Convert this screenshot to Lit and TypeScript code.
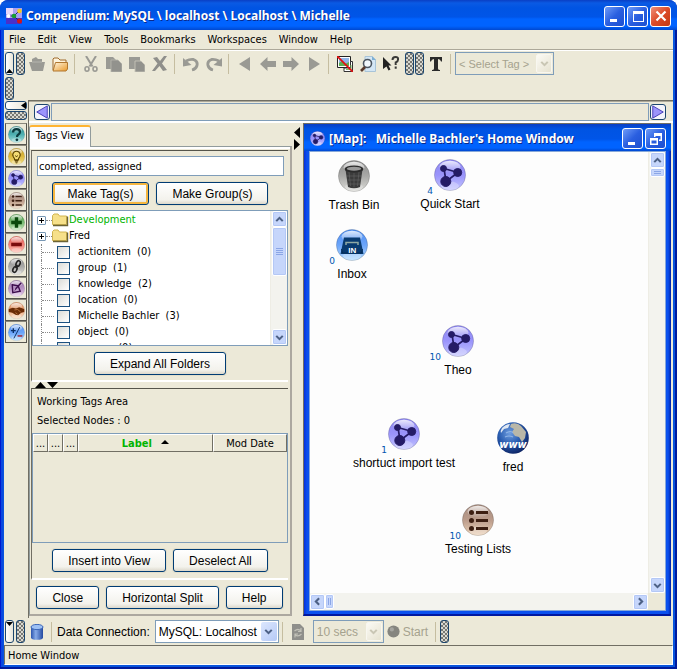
import { LitElement, html, svg, css, nothing } from "lit";
import { customElement, state } from "lit/decorators.js";
import { styleMap } from "lit/directives/style-map.js";

const icon = (body: unknown, size = 16, box = 16) =>
  html`<svg class="ico" width=${size} height=${size} viewBox="0 0 ${box} ${box}" aria-hidden="true">${body}</svg>`;

/* ---- round node symbols, all on a 32 unit grid ---- */
const orb = (fill: string, glyph: unknown) => svg`
  <circle cx="16" cy="16" r="15.6" fill="url(#${fill})" stroke="#0003" stroke-width=".8"/>
  <ellipse cx="16" cy="7.6" rx="10.5" ry="5.8" fill="url(#shine)"/>
  <ellipse cx="16" cy="27" rx="9" ry="4.4" fill="#fff" opacity=".28"/>
  ${glyph}`;

const orbs: Record<string, unknown> = {
  map: orb("gViolet", svg`<g fill="#241b66" stroke="#241b66"><path d="M10 9.5 24 13.500 12 22.500Z" fill="none" stroke-width="1.700"/><circle cx="9.500" cy="9.500" r="3"/><circle cx="23.700" cy="13.500" r="4"/><circle cx="11.800" cy="22.500" r="5"/></g>`),
  trash: orb("gGray", svg`<path d="M7.500 9.500 10 27q6 2.500 12 0L24.500 9.500Z" fill="#3b3b3b"/><path d="M11 12 12.500 26M16 13V27M21 12 19.500 26M9 16H23M9.500 20H22.500M10 24H22" stroke="#666" stroke-width=".6"/><ellipse cx="16" cy="9" rx="9.500" ry="3.600" fill="#2c2c2c"/><ellipse cx="16" cy="8.700" rx="7.200" ry="2" fill="#9a9a9a"/>`),
  inbox: orb("gBlue", svg`<path d="M8 8.500H24L27.500 25H4.500Z" fill="#083a70"/><path d="M10 16V13.500H22V16" fill="none" stroke="#8fa9a4" stroke-width="1.500"/><path d="M5.500 20 6.500 24H25.500L26.500 20" fill="none" stroke="#052c58"/><text x="16.200" y="23.500" text-anchor="middle" font-family="Liberation Sans, sans-serif" font-weight="bold" font-size="8" fill="#fff">IN</text>`),
  list: orb("gBrown", svg`<g fill="#3d1f12"><circle cx="9.500" cy="8.500" r="2.500"/><circle cx="9.500" cy="16.500" r="2.500"/><circle cx="9.500" cy="24.500" r="2.500"/><path d="M14 7H26V10H14ZM14 15H26V18H14ZM14 23H26V26H14Z"/></g>`),
  web: svg`<circle cx="16" cy="16" r="15.800" fill="url(#gGlobe)"/><path d="M14 2q6-2 10 2l5 6-1 6-3 4-3-5-4-1-3-4 2-3-4-2Z" fill="#b9b7a8"/><path d="M5 6q4-4 8-4l-2 4-4 1-3 4q-1-2 1-5Z" fill="#dfe7f2"/><path d="M9 11q5-3 7 0M8 15q4-2 8 0" stroke="#8fb4e6" fill="none" stroke-width="1.200"/><text x="16" y="26" text-anchor="middle" font-family="DejaVu Sans, sans-serif" font-weight="bold" font-style="italic" font-size="10" fill="#fff">www</text>`,
  question: orb("gTeal", svg`<path d="M9.500 12q0-6 6.500-6t6.500 5.500q0 3-3.500 5-2 1.200-2 4" fill="none" stroke="#0b3a3e" stroke-width="4.200"/><circle cx="16.800" cy="26" r="2.600" fill="#0b3a3e"/>`),
  bulb: orb("gYellow", svg`<path d="M12.500 22q0-3-2.500-5.500-2.500-4.500 1-8.500 5-4 10 0 3.500 4 1 8.500Q19.500 19 19.500 22Z" fill="#f4dc74" stroke="#574000" stroke-width="2"/><path d="M12.500 23.500h7M13 26h6M14.500 28h3M14 14l2 3 2-3" stroke="#574000" stroke-width="1.800" fill="none"/>`),
  plus: orb("gGreen", svg`<path d="M12.800 6H19.200V12.800H26V19.200H19.200V26H12.800V19.200H6V12.800H12.800Z" fill="#0a4a0c"/>`),
  minus: orb("gRed", svg`<path d="M6 12.800H26V19.200H6Z" fill="#7a0c0c"/>`),
  link: orb("gGray", svg`<g fill="none" stroke="#222" stroke-width="3"><ellipse cx="19" cy="10.500" rx="3.600" ry="5.600" transform="rotate(25 19 10.500)"/><ellipse cx="13" cy="21.500" rx="3.600" ry="5.600" transform="rotate(25 13 21.500)"/><path d="M17.500 13 14.500 19"/></g>`),
  note: orb("gPlum", svg`<path d="M8 9 19 11 23 21 9 24Z" fill="none" stroke="#3d0c4d" stroke-width="2.600"/><path d="M26 6 15 18 12 21 14 15 24 4Z" fill="#3d0c4d"/>`),
  hands: orb("gOrange", svg`<path d="M1.500 13 9 11 15 12 21 10 30.500 13V19L25 20 19 25 14 24 8 20 1.500 19Z" fill="#6b2c06"/><path d="M12 15 18 14 24 19M14 20 18 23" stroke="#d9925a" stroke-width="1.200" fill="none"/>`),
  plusminus: orb("gBlue", svg`<path d="M10 8V17M5.500 12.500H14.500" stroke="#0b2f66" stroke-width="2.600"/><path d="M22 6 11 27" stroke="#0b2f66" stroke-width="1.800"/><path d="M18 22.500H27" stroke="#a3202a" stroke-width="2.600"/>`),
};

const stops = (id: string, a: string, b: string, c: string) => svg`
  <linearGradient id=${id} x1="0" y1="0" x2="0" y2="1"><stop offset="0" stop-color=${a}/><stop offset=".5" stop-color=${b}/><stop offset="1" stop-color=${c}/></linearGradient>`;

const defs = html`<svg class="defs" width="0" height="0" aria-hidden="true"><defs>
  ${stops("gViolet", "#8f88f0", "#9a94fb", "#c4c6ff")}
  ${stops("gGray", "#8b8b8b", "#a9a9a7", "#dcdcd8")}
  ${stops("gBlue", "#4f8ef0", "#6aa4fa", "#b4dcff")}
  ${stops("gBrown", "#a58c80", "#bb9c8b", "#ecd2b8")}
  ${stops("gTeal", "#2c8a8e", "#4fb0b2", "#a9e0de")}
  ${stops("gYellow", "#c39a24", "#dcb93e", "#f4e28a")}
  ${stops("gGreen", "#4f9a4c", "#7abb74", "#c4e8bc")}
  ${stops("gRed", "#dc5a50", "#f08078", "#ffc4b8")}
  ${stops("gPlum", "#9470a4", "#b894c4", "#e6cdea")}
  ${stops("gOrange", "#d98858", "#eeb088", "#fbdcc0")}
  ${stops("shine", "#ffffffd0", "#ffffff70", "#ffffff00")}
  <radialGradient id="gGlobe" cx=".4" cy=".35" r=".7"><stop offset="0" stop-color="#6f9ee0"/><stop offset=".5" stop-color="#2a5db0"/><stop offset="1" stop-color="#0a1f5e"/></radialGradient>
  <linearGradient id="gFolder" x1="0" y1="0" x2="1" y2="1"><stop offset="0" stop-color="#fff6e0"/><stop offset="1" stop-color="#ea9a2c"/></linearGradient>
  <linearGradient id="gDb" x1="0" y1="0" x2="1" y2="0"><stop offset="0" stop-color="#2c55ae"/><stop offset=".4" stop-color="#86aae8"/><stop offset="1" stop-color="#2349a0"/></linearGradient>
</defs></svg>`;

/* ---- toolbar symbols, 16 unit grid ---- */
const G = "#9a9a94";
const tools: Record<string, unknown> = {
  open: svg`<path d="M3 3 7 1 9 3H13V6H16L14 15H3L0 6H3Z" fill=${G}/><path d="M3 6H13" stroke="#b5b5ae"/>`,
  folder: svg`<path d="M1 14V3L2 2H6L8 4H14V14Z" fill="#fdf3dc" stroke="#a06a2c"/><path d="M1 15 3.500 6.500H15.500V13L14 15Z" fill="url(#gFolder)" stroke="#b0762e"/>`,
  cut: svg`<path d="M3 0 9.500 10.500M13 0 6.500 10.500" stroke=${G} stroke-width="2"/><ellipse cx="4" cy="13" rx="2" ry="2.200" fill="none" stroke=${G} stroke-width="1.600"/><ellipse cx="12" cy="13" rx="2" ry="2.200" fill="none" stroke=${G} stroke-width="1.600"/>`,
  copy: svg`<path d="M0 1H7L10 4V13H0Z" fill=${G}/><path d="M5 4H12L16 8V16H5Z" fill="#92928d" stroke="#b9b8ae" stroke-width=".8"/>`,
  paste: svg`<path d="M0 1H11V13H0Z" fill=${G}/><path d="M6 5H12L16 9V16H6Z" fill="#92928d" stroke="#c6c4b8" stroke-width=".9"/>`,
  del: svg`<path d="M1 2 5 1 8 5 12 0H15L10 7.500 15 14 11 15 7.500 10 3 15H0L5.500 7.500Z" fill="#8f8f8b"/>`,
  undo: svg`<path d="M3 5Q7 3 10.500 3.500 15 5 14 9.500 13 13 9 14" fill="none" stroke=${G} stroke-width="2.800"/><path d="M0 2V10.500L8.500 9Z" fill=${G}/>`,
  redo: svg`<path d="M13 5Q9 3 5.500 3.500 1 5 2 9.500 3 13 7 14" fill="none" stroke=${G} stroke-width="2.800"/><path d="M16 2V10.500L7.500 9Z" fill=${G}/>`,
  first: svg`<path d="M13 1V15L2 8Z" fill=${G}/>`,
  back: svg`<path d="M0 8 7.500 1V5H16V11H7.500V15Z" fill=${G}/>`,
  fwd: svg`<path d="M16 8 8.500 1V5H0V11H8.500V15Z" fill=${G}/>`,
  last: svg`<path d="M3 1V15L14 8Z" fill=${G}/>`,
  image: svg`<path d="M.5 .5H13.500V11.500H.5Z" fill="#fff" stroke="#222"/><path d="M2 2H12V10H2Z" fill="#8fb4e8"/><path d="M2 10V7L5 5 8 8 12 6V10Z" fill="#5cae50"/><path d="M7 12H13.500V5.500H15.500V15.500H7Z" fill="#fff" stroke="#333"/><path d="M9 13.500H14V9" fill="none" stroke="#7cb85c"/><path d="M0 0 16 16" stroke="#e01010" stroke-width="1.800"/>`,
  find: svg`<path d="M5 .5H12L15.500 4V15.500H5Z" fill="#d4e6f4" stroke="#a8c4d8"/><path d="M12 0V4H16" fill="#7fb0d4"/><circle cx="7.500" cy="7.500" r="4" fill="#f2f8fc" stroke="#4b5560" stroke-width="1.600"/><path d="M5 11 1 15" stroke="#5a3a2c" stroke-width="2.600"/>`,
  help: svg`<path d="M0 1 8.500 9.500H5.500L7.500 13.500 5.500 14.500 3.500 10.500 0 13Z" fill="#222"/><path d="M9.500 4Q9.500 1 12.500 1T15 3.700Q15 5.500 12.700 6.500V9M12.700 10.500V12.800" fill="none" stroke="#3a3a38" stroke-width="2"/>`,
  text: svg`<path d="M2 1H14V5.500H13Q12.500 3 10 3V12.500Q10 14 12 14V15H4V14Q6 14 6 12.500V3Q3.500 3 3 5.500H2Z" fill="#2a2a2a"/>`,
  db: svg`<path d="M2 3V13.500Q2 15.800 8 15.800T14 13.500V3Z" fill="url(#gDb)"/><ellipse cx="8" cy="3" rx="6" ry="2.600" fill="#9cc0f4" stroke="#3b66b8"/>`,
  refresh: svg`<path d="M2 0H10L14 4V16H2Z" fill="#8f8f8b"/><path d="M4.500 7Q8 4 11 7M11 4V7.500H8M11.500 10Q8 13.500 5 10.500M5 13.500V10H8" stroke="#c2c1b8" stroke-width="1.200" fill="none"/>`,
};

const chevron = (dir: "up" | "down" | "left" | "right", color = "#4d6185") => {
  const d = { up: "M4 10 8 6 12 10", down: "M4 6 8 10 12 6", left: "M10 4 6 8 10 12", right: "M6 4 10 8 6 12" }[dir];
  return icon(svg`<path d=${d} fill="none" stroke=${color} stroke-width="2.600"/>`, 13);
};

type MapNode = { kind: string; label: string; count?: number; x: number; y: number };
const nodes: MapNode[] = [
  { kind: "trash", label: "Trash Bin", x: 44, y: 8 },
  { kind: "map", label: "Quick Start", count: 4, x: 140, y: 7 },
  { kind: "inbox", label: "Inbox", count: 0, x: 42, y: 77 },
  { kind: "map", label: "Theo", count: 10, x: 148, y: 173 },
  { kind: "map", label: "shortuct import test", count: 1, x: 94, y: 266 },
  { kind: "web", label: "fred", x: 203, y: 270 },
  { kind: "list", label: "Testing Lists", count: 10, x: 168, y: 352 },
];

const palette: [string, string][] = [
  ["question", "Question"], ["bulb", "Answer"], ["map", "Map"], ["list", "List"], ["plus", "Pro"],
  ["minus", "Con"], ["link", "Reference"], ["note", "Note"], ["hands", "Decision"], ["plusminus", "Argument"],
];

const toolbar: [string, string][][] = [
  [["open", "Open"], ["folder", "New"]],
  [["cut", "Cut"], ["copy", "Copy"], ["paste", "Paste"], ["del", "Delete"]],
  [["undo", "Undo"], ["redo", "Redo"]],
  [["first", "First"], ["back", "Back"], ["fwd", "Forward"], ["last", "Last"]],
  [["image", "Images"], ["find", "Search"], ["help", "What is this"]],
];

@customElement("app-root")
export class AppRoot extends LitElement {
  @state() private tags = "completed, assigned";

  static styles = css`
    :host { display: block; --face: #ece9d8; --line: #7f9db9; --ui: "DejaVu Sans Condensed", "DejaVu Sans", sans-serif; --arial: "Liberation Sans", Arial, sans-serif; }
    * { box-sizing: border-box; }
    button, input, select { font: inherit; color: inherit; margin: 0; padding: 0; }
    button { background: none; border: 0; }
    .defs { position: absolute; }
    .ico { display: block; flex: none; }
    .window { height: 100vh; min-height: 640px; display: flex; flex-direction: column; border-radius: 8px 8px 0 0; overflow: hidden; font: 11px/16px var(--ui); color: #000;
      background: linear-gradient(90deg, #0019cf 0 1px, #0a48e0 1px 3px, #0855dd 3px calc(100% - 4px), #0855dd calc(100% - 4px) calc(100% - 2px), #001a9c calc(100% - 2px)); border-bottom: 2px solid #001a9c; padding-bottom: 2px; }
    .titlebar { flex: none; height: 30px; display: flex; align-items: center; gap: 4px; padding: 2px 6px 0 6px; background: linear-gradient(#0a3fc4, #0a5ae4 3px, #0054e3 8px, #0055e8 17px, #0063ff 19px, #0063ff 26px, #0048d0); color: #fff; }
    .titlebar h1 { margin: 0; flex: 1; font: bold 12px/20px "Noto Sans", sans-serif; text-shadow: 1px 1px #0a2a8c; white-space: nowrap; }
    .caption { display: flex; gap: 2px; }
    .cap { width: 21px; height: 21px; border: 1px solid #fff; border-radius: 3px; background: linear-gradient(135deg, #6f9cf8, #2a5fe0 50%, #1c4fd0); display: grid; place-items: center; }
    .cap.close { background: linear-gradient(135deg, #f0907a, #dc4a28 50%, #c43a14); }
    .frame { flex: 1; min-height: 0; margin: 0 4px; background: var(--face); display: flex; flex-direction: column; }
    .menubar { flex: none; height: 20px; display: flex; gap: 12px; padding: 1px 5px 0; border-bottom: 1px solid #aca899; }
    .tools { flex: none; height: 50px; border-top: 1px solid #fff; padding: 1px; display: flex; flex-direction: column; gap: 2px; }
    .row { display: flex; align-items: center; height: 23px; }
    .grips { display: flex; gap: 2px; }
    .grips.pair { margin-left: 3px; gap: 1px; }
    .grip, .fold { flex: none; width: 9px; height: 23px; border: 1px solid #1c466f; border-radius: 3px; }
    .grip { background: conic-gradient(#333 0 25%, transparent 0) 0 1px / 4px 4px, #d5d5cd; background: linear-gradient(#222, #222) 0 0 / 1px 1px, #d5d5cd; background: radial-gradient(circle at 1px 1px, #333 0 0.5px, transparent 1px) 0 0 / 4px 4px, radial-gradient(circle at 1px 1px, #333 0 0.5px, transparent 1px) 2px 2px / 4px 4px, #d8d8d0; }
    .fold { background: linear-gradient(90deg, #fff, #e9e6d8); display: grid; place-items: end center; }
    .fold.top { place-items: start center; }
    .wide { width: 22px; height: 9px; }
    .fold.wide { place-items: center end; }
    .tool { width: 23px; height: 23px; display: grid; place-items: center; }
    .sep { flex: none; width: 1px; height: 20px; background: #c5bda0; margin: 0 4px 0 3px; }
    .combo { position: relative; display: grid; }
    .combo select { appearance: none; height: 23px; border: 1px solid var(--line); border-radius: 0; background: #fff; font: 12px/20px var(--arial); padding: 0 20px 0 3px; opacity: 1; }
    .combo select:disabled { background: var(--face); color: #a5a28e; }
    .combo .drop { position: absolute; right: 2px; top: 2px; width: 16px; height: 19px; border-radius: 2px; background: linear-gradient(135deg, #dce7fe, #b5c9f6); display: grid; place-items: center; pointer-events: none; }
    .combo .drop.off { background: linear-gradient(135deg, #fbfaf4, #e6e2d0); border: 1px solid #f8f7f0; }
    .tagsel { width: 99px; } .consel { width: 124px; } .timesel { width: 71px; }
    .small select { font-size: 11px; }
    .body { flex: 1; min-height: 0; display: flex; }
    .palette { flex: none; width: 24px; padding: 1px 1px 0; display: flex; flex-direction: column; gap: 1px; }
    .orbs { display: flex; flex-direction: column; margin-top: 2px; }
    .orbbtn { width: 22px; height: 22px; border: 1px solid #55544e; border-top-color: #8a887c; display: grid; place-items: center; }
    .main { flex: 1; min-width: 0; display: flex; flex-direction: column; border: 1px solid #716f64; border-width: 1px 0 0 1px; }
    .nav { flex: none; height: 22px; display: flex; align-items: center; gap: 1px; padding: 0 7px 0 5px; border-bottom: 2px solid #fff; border-top: 1px solid #aca899; }
    .nav .track { flex: 1; height: 18px; border: 1px solid var(--line); }
    .navbtn { width: 16px; height: 16px; border: 1px solid #1c466f; border-radius: 3px; background: #f4f4fb; display: grid; place-items: center; }
    .split { flex: 1; min-height: 0; display: flex; }
    .side { flex: 0 0 263px; display: flex; flex-direction: column; padding-top: 2px; }
    .tab { align-self: flex-start; height: 22px; width: 62px; margin-bottom: -1px; z-index: 1; border: 1px solid #919b9c; border-top: 2px solid #ffb433; border-bottom: 0; border-radius: 3px 3px 0 0; background: #fcfcfe; line-height: 17px; text-align: center; white-space: nowrap; }
    .sheet { flex: 1; min-height: 0; display: flex; flex-direction: column; border: 1px solid #919b9c; border-right: 2px solid #aca8a0; border-bottom: 2px solid #aca8a0; margin-bottom: 2px; padding: 3px 2px 0 1px; background: var(--face); box-shadow: inset 0 2px #fff; }
    .upper, .lower { border-top: 1px solid #55544a; border-left: 1px solid #716f64; display: flex; flex-direction: column; }
    .upper { flex: none; border-bottom: 2px solid #fff; padding-top: 5px; }
    .field { margin: 0 4px 6px 5px; height: 20px; border: 1px solid var(--line); background: #fff; padding: 0 1px; width: auto; }
    .btns { display: flex; justify-content: center; gap: 7px; }
    .btn { height: 23px; border: 1px solid #003c74; border-radius: 3px; background: linear-gradient(#fff, #f3f2ec 80%, #dcd8cb); box-shadow: 0 0 0 1px #e2deca; font: 12px/20px var(--arial); padding: 0 15px; white-space: nowrap; }
    .btn.def { box-shadow: inset 0 0 0 2px #f5b640; }
    .tree { margin-top: 5px; height: 136px; border: 1px solid var(--line); background: #fff; display: flex; }
    .items { flex: 1; min-width: 0; height: 134px; overflow: hidden; padding: 1px 0 0 4px; margin: 0; list-style: none; }
    .items li { height: 16px; display: flex; align-items: center; white-space: nowrap; }
    .twig { flex: none; width: 9px; height: 9px; border: 1px solid #7898b5; border-radius: 1px; background: #fff; display: grid; place-items: center; }
    .dash { flex: none; width: 6px; border-top: 1px dotted #888; }
    .green { color: #00b400; }
    .items .leaf { margin-left: 4px; border-left: 1px dotted #888; }
    .leaf .dash { width: 12px; margin-right: 3px; }
    .leaf label { display: flex; align-items: center; gap: 8px; white-space: pre; }
    .leaf input { appearance: none; flex: none; width: 13px; height: 13px; border: 1px solid #1c5180; background: linear-gradient(135deg, #dcdcd7, #fff); }
    .bar { flex: none; background: #f3f3ee; display: flex; }
    .bar.v { width: 17px; flex-direction: column; border-left: 1px solid #eeede5; align-items: center; }
    .bar.h { height: 17px; align-items: center; }
    .sb, .thumb { border: 1px solid #fff; border-radius: 2px; background: #c6d6fb; box-shadow: inset 0 0 0 1px #b4c8f6; display: grid; place-items: center; }
    .sb { flex: none; width: 15px; height: 16px; }
    .thumb.tall { width: 15px; height: 49px; } .thumb.flat { width: 15px; height: 9px; } .thumb.slim { width: 9px; height: 15px; }
    .grow { flex: 1; }
    .expand { padding: 6px 0 5px; }
    .arrows { flex: none; height: 6px; padding-left: 4px; display: flex; }
    .lower { flex: 1; min-height: 0; border-bottom: 2px solid #fff; padding-top: 4px; }
    .note { margin: 0; padding-left: 5px; height: 19px; line-height: 17px; }
    .grid { flex: 1; min-height: 0; margin: 2px 0 6px; border: 1px solid var(--line); }
    table { width: 100%; table-layout: fixed; border-collapse: separate; border-spacing: 0; }
    th { height: 18px; padding: 0; font-weight: normal; text-align: center; border: 1px solid #fff; border-right-color: #716f64; border-bottom-color: #716f64; overflow: hidden; line-height: 15px; }
    th.dots { width: 15px; } th.date { width: 74px; }
    th.lab { font-weight: bold; color: #00b400; }
    th .ico { display: inline-block; margin-left: 6px; vertical-align: 3px; }
    .foot { padding: 6px 0 5px; }
    .pad { padding-bottom: 6px; }
    .divider { flex: none; width: 11px; padding: 4px 2px; display: flex; flex-direction: column; gap: 1px; }
    .mapwin { flex: 1; min-width: 0; margin: 0 2px 2px 0; display: flex; flex-direction: column; border: 1px solid #716f64; border-right-width: 0; background: linear-gradient(90deg, #0831d9, #0a50ee 3px, #0a50ee calc(100% - 3px), #001fa8); padding: 0 5px 3px 5px; border-bottom: 2px solid #0018a0; }
    .maphead { flex: none; height: 27px; margin: 0 -5px; padding: 2px 5px 0 6px; display: flex; align-items: center; gap: 4px; background: linear-gradient(#0a3fc4, #0054e3 5px, #0055e8 15px, #0063ff 18px, #0063ff 24px, #0048d0); color: #fff; font: bold 12px/20px "Noto Sans", sans-serif; text-shadow: 1px 1px #0a2a8c; white-space: pre; }
    .maphead h2 { flex: 1; min-width: 0; margin: 0; font: inherit; overflow: hidden; }
    .mapbody { flex: 1; min-height: 0; border: 1px solid #87a8d8; background: var(--face); display: grid; grid-template: minmax(0, 1fr) 17px / minmax(0, 1fr) 17px; }
    .canvas { position: relative; background: #fdfdfd; overflow: hidden; }
    .node { position: absolute; width: 130px; margin-left: -65px; display: flex; flex-direction: column; align-items: center; gap: 5px; font: 12px/16px var(--arial); }
    .count { position: absolute; right: 82px; top: 26px; font: 9px/12px "DejaVu Sans", sans-serif; color: #0055b0; }
    .bottombar { flex: none; height: 27px; display: flex; align-items: center; padding: 0 1px; }
    .bottombar label, .start { font: 12px/20px var(--arial); }
    .bottombar label { margin: 0 5px 0 1px; }
    .combo.timed { margin-left: 3px; }
    .start { display: flex; align-items: center; gap: 3px; color: #a5a28e; margin: 0 4px 0 3px; }
    .status { flex: none; height: 20px; border: 1px solid #716f64; border-right-color: #fff; border-bottom-color: #fff; padding: 0 3px; line-height: 19px; }
  `;

  private grips(up = true) {
    return html`<div class="grips">
      <button class="fold ${up ? "" : "top"}" aria-label="Collapse toolbar"><svg class="ico" width="7" height="6" viewBox="0 0 7 6"><path d=${up ? "M0 5 3.500 1 7 5Z" : "M0 1 3.500 5 7 1Z"}/></svg></button>
      <span class="grip"></span></div>`;
  }

  private toolButton([key, label]: [string, string]) {
    return html`<button class="tool" aria-label=${label}>${icon(tools[key])}</button>`;
  }

  private leaf(name: string, n: number) {
    return html`<li class="leaf"><span class="dash"></span><label><input type="checkbox" />${name}  (${n})</label></li>`;
  }

  private branch(name: string, green = false) {
    return html`<li><button class="twig" aria-label="Expand ${name}"><svg class="ico" width="5" height="5" viewBox="0 0 5 5"><path d="M0 2H5V3H0ZM2 0H3V5H2Z"/></svg></button><span class="dash"></span>
      <svg class="ico" width="17" height="14" viewBox="0 0 17 14"><path d="M.5 11.500V2.500L2 1H6L7.500 3H14.500V11.500Z" fill="#f6e08a" stroke="#d0b450"/><path d="M1 12.500H15.500V3.500" fill="none" stroke="#6b6336" stroke-width="1.400"/></svg>
      <span class=${green ? "green" : ""}>${name}</span></li>`;
  }

  render() {
    return html`${defs}
    <div class="window">
      <header class="titlebar">
        <svg class="ico" width="16" height="16" viewBox="0 0 16 16"><path d="M0 0H16V16H0Z" fill="#a8a0f0"/><path d="M0 10H16V16H0Z" fill="#4a30c8"/><path d="M0 0H7V6H0Z" fill="#e8d8fa"/><path d="M2 8H8L13 3M8 8 13 13" stroke="#202060" fill="none"/><circle cx="2.500" cy="8" r="2" fill="#fff"/><circle cx="8" cy="8" r="2.300" fill="#18a030"/><circle cx="13.500" cy="3" r="2.300" fill="#f0c820"/><circle cx="13.500" cy="13" r="2.500" fill="#d01818"/></svg>
        <h1>Compendium: MySQL \\ localhost \\ Localhost \\ Michelle</h1>
        <div class="caption">
          <button class="cap" aria-label="Minimize">${icon(svg`<path d="M3 11H10V14H3Z" fill="#fff"/>`)}</button>
          <button class="cap" aria-label="Maximize">${icon(svg`<path d="M3 3H14V14H3ZM4 6V13H13V6Z" fill="#fff" fill-rule="evenodd"/>`)}</button>
          <button class="cap close" aria-label="Close">${icon(svg`<path d="M3.500 3.500 12.500 12.500M12.500 3.500 3.500 12.500" stroke="#fff" stroke-width="2.200"/>`)}</button>
        </div>
      </header>
      <div class="frame">
        <nav class="menubar">${["File", "Edit", "View", "Tools", "Bookmarks", "Workspaces", "Window", "Help"].map((m) => html`<button>${m}</button>`)}</nav>
        <div class="tools">
          <div class="row">
            ${this.grips()}
            ${toolbar.map((g, i) => html`${i ? html`<span class="sep"></span>` : nothing}${g.map((b) => this.toolButton(b))}`)}
            <div class="grips pair"><span class="grip"></span><span class="grip"></span></div>
            ${this.toolButton(["text", "Format text"])}<span class="sep"></span>
            <span class="combo small"><select class="tagsel" aria-label="Tag" disabled><option>&lt; Select Tag &gt;</option></select><span class="drop off">${chevron("down", "#c9c6b4")}</span></span>
          </div>
          <div class="row"><span class="grip"></span></div>
        </div>
        <div class="body">
          <aside class="palette">
            <button class="fold wide" aria-label="Collapse palette"><svg class="ico" width="5" height="7" viewBox="0 0 5 7"><path d="M5 0V7L0 3.500Z"/></svg></button>
            <span class="grip wide"></span>
            <div class="orbs">${palette.map(([k, l]) => html`<button class="orbbtn" aria-label=${l}>${icon(orbs[k], 17, 32)}</button>`)}</div>
          </aside>
          <main class="main">
            <div class="nav">
              <button class="navbtn" aria-label="Scroll left">${icon(svg`<path d="M14 1V15L2 8Z" fill="#9c94fb" stroke="#3c34b0"/>`, 14)}</button>
              <div class="track"></div>
              <button class="navbtn" aria-label="Scroll right">${icon(svg`<path d="M2 1V15L14 8Z" fill="#9c94fb" stroke="#3c34b0"/>`, 14)}</button>
            </div>
            <div class="split">
              ${this.sidePanel()}
              <div class="divider">
                <svg class="ico" width="6" height="23" viewBox="0 0 6 23"><path d="M6 0V11L0 5.500ZM0 12V23L6 17.500Z"/></svg>
              </div>
              ${this.mapWindow()}
            </div>
          </main>
        </div>
        <div class="bottombar">
          ${this.grips(false)}
          ${this.toolButton(["db", "Database"])}<span class="sep"></span>
          <label for="con">Data Connection:</label>
          <span class="combo"><select id="con" class="consel"><option>MySQL: Localhost</option></select><span class="drop">${chevron("down")}</span></span>
          <span class="sep"></span>${this.toolButton(["refresh", "Refresh"])}
          <span class="combo timed"><select class="timesel" aria-label="Interval" disabled><option>10 secs</option></select><span class="drop off">${chevron("down", "#c9c6b4")}</span></span>
          <button class="start" disabled>${icon(svg`<circle cx="8" cy="8" r="7.500" fill="#85857f"/><circle cx="6" cy="5.500" r="2.600" fill="#a5a5a0"/>`, 13)}Start</button>
          <span class="sep"></span><span class="grip"></span>
        </div>
        <footer class="status">Home Window</footer>
      </div>
    </div>`;
  }

  private sidePanel() {
    return html`<section class="side">
      <div class="tab">Tags View</div>
      <div class="sheet">
        <div class="upper">
          <input class="field" type="text" aria-label="Tags" .value=${this.tags} @input=${(e: Event) => (this.tags = (e.target as HTMLInputElement).value)} />
          <div class="btns"><button class="btn def">Make Tag(s)</button><button class="btn">Make Group(s)</button></div>
          <div class="tree">
            <ul class="items">
              ${this.branch("Development", true)}${this.branch("Fred")}
              ${this.leaf("actionitem", 0)}${this.leaf("group", 1)}${this.leaf("knowledge", 2)}${this.leaf("location", 0)}
              ${this.leaf("Michelle Bachler", 3)}${this.leaf("object", 0)}${this.leaf("person", 0)}
            </ul>
            <div class="bar v">
              <button class="sb" aria-label="Up">${chevron("up")}</button>
              <div class="thumb tall"><svg class="ico" width="7" height="8" viewBox="0 0 7 8"><path d="M0 .5H7M0 2.500H7M0 4.500H7M0 6.500H7" stroke="#8ba6e6"/></svg></div>
              <span class="grow"></span>
              <button class="sb" aria-label="Down">${chevron("down")}</button>
            </div>
          </div>
          <div class="btns expand"><button class="btn">Expand All Folders</button></div>
        </div>
        <div class="arrows"><svg class="ico" width="24" height="6" viewBox="0 0 24 6"><path d="M0 6 5.500 0 11 6ZM12 0H23L17.500 6Z"/></svg></div>
        <div class="lower">
          <p class="note">Working Tags Area</p>
          <p class="note">Selected Nodes : 0</p>
          <div class="grid"><table><thead><tr>
            <th class="dots">...</th><th class="dots">...</th><th class="dots">...</th>
            <th class="lab">Label <svg class="ico" width="8" height="4" viewBox="0 0 8 4"><path d="M0 4 4 0 8 4Z"/></svg></th><th class="date">Mod Date</th>
          </tr></thead></table></div>
          <div class="btns pad"><button class="btn">Insert into View</button><button class="btn">Deselect All</button></div>
        </div>
        <div class="btns foot"><button class="btn">Close</button><button class="btn">Horizontal Split</button><button class="btn">Help</button></div>
      </div>
    </section>`;
  }

  private mapWindow() {
    return html`<section class="mapwin">
      <header class="maphead">
        ${icon(orbs.map, 15, 32)}
        <h2>[Map]:   Michelle Bachler's Home Window</h2>
        <div class="caption">
          <button class="cap" aria-label="Minimize map">${icon(svg`<path d="M3 11H10V14H3Z" fill="#fff"/>`)}</button>
          <button class="cap" aria-label="Restore map">${icon(svg`<path d="M6 2H14V10H11V8.500H12.500V5H7.500V6H6ZM2 7H10V14H2ZM3.500 9.500V12.500H8.500V9.500Z" fill="#fff" fill-rule="evenodd"/>`)}</button>
        </div>
      </header>
      <div class="mapbody">
        <div class="canvas">${nodes.map((n) => html`<div class="node" style=${styleMap({ left: `${n.x}px`, top: `${n.y}px` })}>
          ${icon(orbs[n.kind], 32, 32)}${n.count === undefined ? nothing : html`<span class="count">${n.count}</span>`}<span>${n.label}</span></div>`)}</div>
        <div class="bar v">
          <button class="sb" aria-label="Scroll up">${chevron("up")}</button>
          <div class="thumb flat"><svg class="ico" width="7" height="4" viewBox="0 0 7 4"><path d="M0 .5H7M0 2.500H7" stroke="#8ba6e6"/></svg></div>
          <span class="grow"></span>
          <button class="sb" aria-label="Scroll down">${chevron("down")}</button>
        </div>
        <div class="bar h">
          <button class="sb" aria-label="Scroll map left">${chevron("left")}</button>
          <div class="thumb slim"><svg class="ico" width="4" height="7" viewBox="0 0 4 7"><path d="M.5 0V7M2.500 0V7" stroke="#8ba6e6"/></svg></div>
          <span class="grow"></span>
          <button class="sb" aria-label="Scroll map right">${chevron("right")}</button>
        </div>
      </div>
    </section>`;
  }
}
